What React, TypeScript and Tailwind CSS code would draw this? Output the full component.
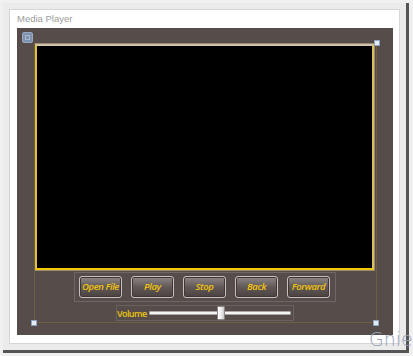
import React from "react";

const buttons = ["Open File", "Play", "Stop", "Back", "Forward"];

function Handle({ className }: { className: string }) {
  return (
    <div
      className={
        "absolute w-[6px] h-[6px] bg-[#e4ecf4] border border-[#8ea3bd] " + className
      }
    />
  );
}

export default function App() {
  return (
    <div className="relative w-[413px] h-[356px] bg-[#f0f0f0] p-[3px] overflow-hidden">
      <div className="w-[406px] h-[350px] border-r-[3px] border-b-[3px] border-[#555555] bg-[#ebebeb] pt-[6px] pl-[6px]">
        <div className="w-[391px] h-[335px] bg-white border border-[#d6d6d6] pl-[7px]">
          <div
            className="h-[18px] pt-[1px] text-[9.5px] leading-[16px] text-[#9c9c9c]"
            style={{ fontFamily: '"Liberation Sans", Arial, sans-serif' }}
          >
            Media Player
          </div>
          <div className="w-[376px] h-[307px] bg-[#564d4b] pl-[17px] pt-[15px]">
            <div className="relative w-[343px] h-[280px] flex flex-col">
              {/* video frame */}
              <div className="w-[341px] h-[228px] border border-[#9b8a6c] border-l-[#cdb12a]">
                <div className="w-full h-full border-[2px] border-[#cfc3ae] border-l-[#e0c23a] border-r-[#d8c05a] border-b-[#f5c900] bg-black" />
              </div>
              {/* buttons */}
              <div className="ml-[40px] mt-[1px] w-[262px] h-[30px] border border-[#6f6765] flex items-center gap-[9px] pl-[4px]">
                {buttons.map((b) => (
                  <div
                    key={b}
                    className="w-[43px] h-[22px] rounded-[3px] border border-[#c4c0be] bg-linear-to-b from-[#8e8886] via-[#615957] to-[#4a4240] shadow-[inset_0_0_0_1px_#3e3735] flex items-center justify-center italic font-semibold text-[9.5px] text-[#f2c40f]"
                    style={{ fontFamily: '"Open Sans", "DejaVu Sans", sans-serif', letterSpacing: "-0.4px" }}
                  >
                    {b}
                  </div>
                ))}
              </div>
              {/* volume */}
              <div className="ml-[82px] mt-[3px] w-[178px] h-[16px] border border-[#6a6260] flex items-center">
                <span
                  className="text-[9px] font-semibold text-[#ecc410] leading-none"
                  style={{ fontFamily: '"Open Sans", "DejaVu Sans", sans-serif', letterSpacing: "-0.6px" }}
                >
                  Volume
                </span>
                <div className="relative ml-auto mr-[2px] w-[142px] h-[4px] rounded-[1px] bg-[#f4f4f4] border border-[#a9a5a3]">
                  <div className="absolute left-[67px] top-[-6px] w-[8px] h-[14px] rounded-[1px] border border-[#8a8685] bg-linear-to-r from-[#ffffff] via-[#eeeeee] to-[#c8c8c8]" />
                </div>
              </div>
              {/* designer adorners */}
              <div className="absolute inset-0 border border-t-0 border-[#6f5d45] pointer-events-none" />
              <div className="absolute left-[-12px] top-[-11px] w-[11px] h-[11px] rounded-[2px] bg-[#7f93ae] border border-[#97a8c0] flex items-center justify-center">
                <div className="w-[5px] h-[5px] border border-[#a9b8cc]" />
              </div>
              <Handle className="left-[340px] top-[-3px]" />
              <Handle className="left-[-3px] top-[277px]" />
              <Handle className="left-[339px] top-[277px]" />
            </div>
          </div>
        </div>
      </div>
      <div
        className="absolute left-[369px] top-[330px] text-[19px] text-[#93a1b6] leading-none"
        style={{ fontFamily: '"DejaVu Sans", sans-serif', fontWeight: 200 }}
      >
        Gnie
      </div>
    </div>
  );
}
